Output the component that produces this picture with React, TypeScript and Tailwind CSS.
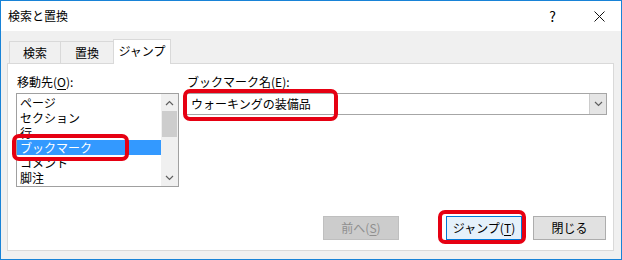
import type { ReactNode } from "react";

const font = { fontFamily: '"Noto Sans CJK JP", "Noto Sans", sans-serif' };

function U({ children }: { children: ReactNode }) {
  return <span className="underline underline-offset-2">{children}</span>;
}

function Chevron({ up }: { up?: boolean }) {
  return (
    <svg width="9" height="6" viewBox="0 0 9 6">
      <polyline
        points={up ? "1,5 4.5,1.5 8,5" : "1,1 4.5,4.5 8,1"}
        fill="none"
        stroke="#606060"
        strokeWidth="1.2"
      />
    </svg>
  );
}

const items = ["ページ", "セクション", "行", "ブックマーク", "コメント", "脚注"];

export default function App() {
  return (
    <div
      className="relative w-[622px] h-[260px] border border-[#1883d7] flex flex-col bg-white text-[12px] text-black overflow-hidden"
      style={font}
    >
      {/* title bar */}
      <div className="h-[30px] flex items-center pl-[7px] pr-[16px] bg-white">
        <span className="leading-none">検索と置換</span>
        <span className="ml-auto mr-[38px] text-[14px] leading-none">?</span>
        <svg width="11" height="11" viewBox="0 0 11 11">
          <path d="M0.5 0.5 L10.5 10.5 M10.5 0.5 L0.5 10.5" stroke="#111" strokeWidth="1" />
        </svg>
      </div>

      {/* body */}
      <div className="flex-1 flex flex-col bg-[#f0f0f0] pt-[8px] pl-[6px] pr-[7px] pb-[8px]">
        {/* tabs */}
        <div className="flex items-end h-[24px] pl-[2px]">
          <div className="w-[52px] h-[22px] border border-b-0 border-[#d9d9d9] flex items-center justify-center">
            検索
          </div>
          <div className="-ml-px w-[54px] h-[22px] border border-b-0 border-[#d9d9d9] flex items-center justify-center">
            置換
          </div>
          <div className="-ml-px w-[58px] h-[25px] -mb-px relative z-10 bg-white border border-b-0 border-[#d9d9d9] flex items-center justify-center pb-[2px]">
            ジャンプ
          </div>
        </div>

        {/* panel */}
        <div className="flex-1 bg-white border border-[#d9d9d9] flex flex-col pt-[10px] pl-[8px] pr-[6px] pb-[10px]">
          <div className="flex gap-[5px]">
            <div className="flex flex-col w-[163px]">
              <div className="h-[16px] leading-[16px] pl-[1px]">
                移動先(<U>O</U>):
              </div>
              <div className="mt-[3px] h-[94px] border border-[#a0a0a0] flex">
                <div className="flex-1 flex flex-col pt-[1px]">
                  {items.map((it) => (
                    <div
                      key={it}
                      className={
                        it === "ブックマーク"
                          ? "h-[15px] leading-[15px] pl-[3px] bg-[#3399ff] text-white"
                          : "h-[15px] leading-[15px] pl-[3px]"
                      }
                    >
                      {it}
                    </div>
                  ))}
                </div>
                <div className="w-[17px] bg-[#f0f0f0] flex flex-col">
                  <div className="h-[17px] flex items-center justify-center">
                    <Chevron up />
                  </div>
                  <div className="h-[26px] mx-[1px] bg-[#cdcdcd]" />
                  <div className="flex-1" />
                  <div className="h-[17px] flex items-center justify-center">
                    <Chevron />
                  </div>
                </div>
              </div>
            </div>

            <div className="flex-1 flex flex-col">
              <div className="h-[16px] leading-[16px] pl-[3px]">
                ブックマーク名(<U>E</U>):
              </div>
              <div className="mt-[3px] h-[22px] border border-[#a6a6a6] flex">
                <div className="flex-1 flex items-center pl-[6px]">ウォーキングの装備品</div>
                <div className="w-[17px] bg-[#e5e5e5] border-l border-[#cccccc] flex items-center justify-center">
                  <Chevron />
                </div>
              </div>
            </div>
          </div>

          <div className="mt-auto flex justify-end pr-[1px]">
            <div className="w-[76px] h-[24px] bg-[#cccccc] border border-[#bfbfbf] text-[#8f8f8f] flex items-center justify-center">
              前へ(<U>S</U>)
            </div>
            <div className="ml-[47px] w-[76px] h-[24px] bg-[#e5f1fb] border border-[#0078d7] flex items-center justify-center">
              ジャンプ(<U>T</U>)
            </div>
            <div className="ml-[11px] w-[73px] h-[24px] bg-[#e1e1e1] border border-[#adadad] flex items-center justify-center">
              閉じる
            </div>
          </div>
        </div>
      </div>

      {/* red annotation frames */}
      <div className="absolute left-[11px] top-[133px] w-[117px] h-[27px] border-[4px] border-[#e60012] rounded-[7px] pointer-events-none" />
      <div className="absolute left-[182px] top-[88px] w-[155px] h-[32px] border-[4px] border-[#e60012] rounded-[7px] pointer-events-none" />
      <div className="absolute left-[437px] top-[209px] w-[88px] h-[34px] border-[4px] border-[#e60012] rounded-[7px] pointer-events-none" />
    </div>
  );
}
